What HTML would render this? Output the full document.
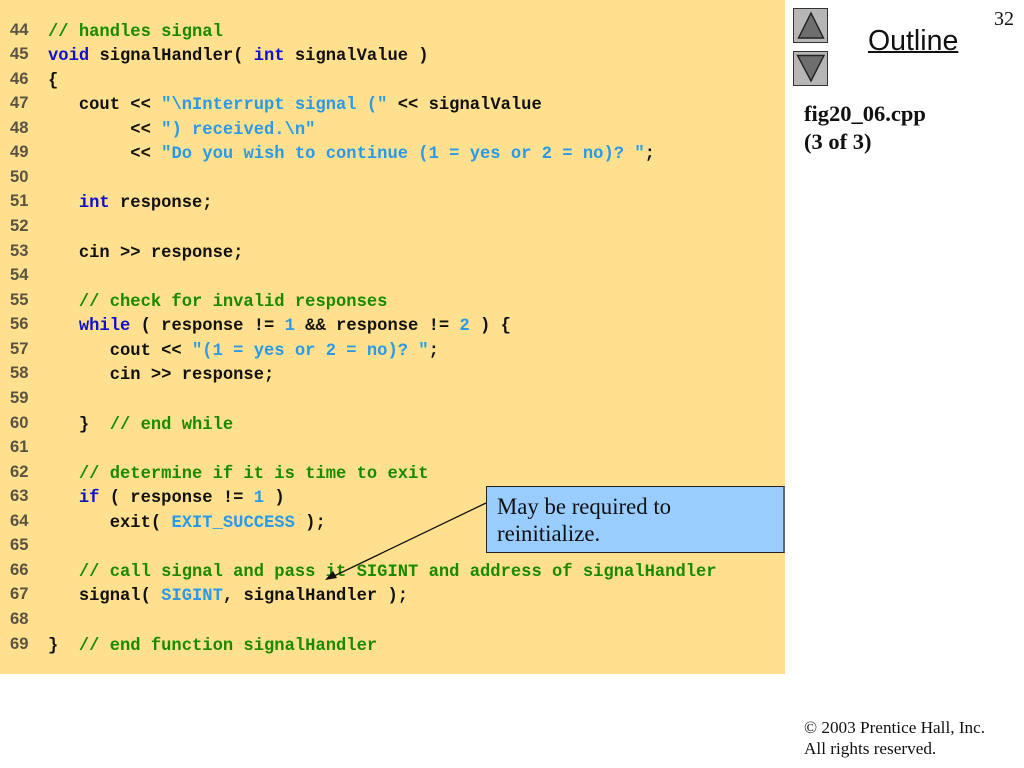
<!DOCTYPE html>
<html>
<head>
<meta charset="utf-8">
<style>
html,body{margin:0;padding:0;background:#fff;width:1024px;height:768px;overflow:hidden;position:relative}
.bg{position:absolute;left:0;top:0;width:785px;height:674px;background:#ffe08f}
pre{position:absolute;margin:0;line-height:24.56px}
.code{left:48px;top:20.5px;font:bold 17.15px/24.56px "Liberation Mono",monospace;color:#111}
.nums{left:10px;top:17.5px;font:bold 16.6px/24.56px "Liberation Sans",sans-serif;color:#5a5340}
.c{color:#1a8a00}.k{color:#1010d0}.s{color:#2a9ae8}
.t{position:absolute;font-family:"Liberation Serif",serif;color:#111;white-space:nowrap}
.btn{position:absolute;left:793px;width:33px;height:33px;background:#b6b6b6;border:1px solid #333}
.callout{position:absolute;left:486px;top:486px;width:296px;height:65px;background:#99ccff;border:1px solid #222;border-right:2px solid #667}
</style>
</head>
<body>
<div class="bg"></div>
<pre class="nums">44
45
46
47
48
49
50
51
52
53
54
55
56
57
58
59
60
61
62
63
64
65
66
67
68
69</pre>
<pre class="code"><span class="c">// handles signal</span>
<span class="k">void</span> signalHandler( <span class="k">int</span> signalValue )
{
   cout &lt;&lt; <span class="s">"\nInterrupt signal ("</span> &lt;&lt; signalValue
        &lt;&lt; <span class="s">") received.\n"</span>
        &lt;&lt; <span class="s">"Do you wish to continue (1 = yes or 2 = no)? "</span>;

   <span class="k">int</span> response;

   cin &gt;&gt; response;

   <span class="c">// check for invalid responses</span>
   <span class="k">while</span> ( response != <span class="s">1</span> &amp;&amp; response != <span class="s">2</span> ) {
      cout &lt;&lt; <span class="s">"(1 = yes or 2 = no)? "</span>;
      cin &gt;&gt; response;

   }  <span class="c">// end while</span>

   <span class="c">// determine if it is time to exit</span>
   <span class="k">if</span> ( response != <span class="s">1</span> )
      exit( <span class="s">EXIT_SUCCESS</span> );

   <span class="c">// call signal and pass it SIGINT and address of signalHandler</span>
   signal( <span class="s">SIGINT</span>, signalHandler );

}  <span class="c">// end function signalHandler</span></pre>

<svg style="position:absolute;left:0;top:0" width="1024" height="768">
<line x1="486" y1="503" x2="332" y2="577" stroke="#111" stroke-width="1.3"/>
<polygon points="325,580 333,571 337,578" fill="#111"/>
</svg>
<div class="callout"></div>
<div class="t" style="left:497px;top:492.5px;font-size:22.8px;line-height:27.5px">May be required to<br>reinitialize.</div>

<div class="btn" style="top:8px"></div>
<div class="btn" style="top:51px"></div>
<svg style="position:absolute;left:793px;top:8px" width="35" height="78">
<polygon points="18,5 30.5,30 5.5,30" fill="#6e6e6e" stroke="#222" stroke-width="1.4"/>
<polygon points="4.5,47.5 31,47.5 18,73" fill="#6e6e6e" stroke="#222" stroke-width="1.4"/>
</svg>
<div class="t" style="left:868px;top:24px;font:28.5px/34px 'Liberation Sans',sans-serif;text-decoration:underline;text-decoration-thickness:2px">Outline</div>
<div class="t" style="left:994px;top:7px;font-size:20px;line-height:24px">32</div>
<div class="t" style="left:804px;top:100px;font-size:22.5px;line-height:27.5px;font-weight:bold">fig20_06.cpp<br>(3 of 3)</div>
<div class="t" style="left:804px;top:717px;font-size:17.2px;line-height:21px">© 2003 Prentice Hall, Inc.<br>All rights reserved.</div>
</body>
</html>
